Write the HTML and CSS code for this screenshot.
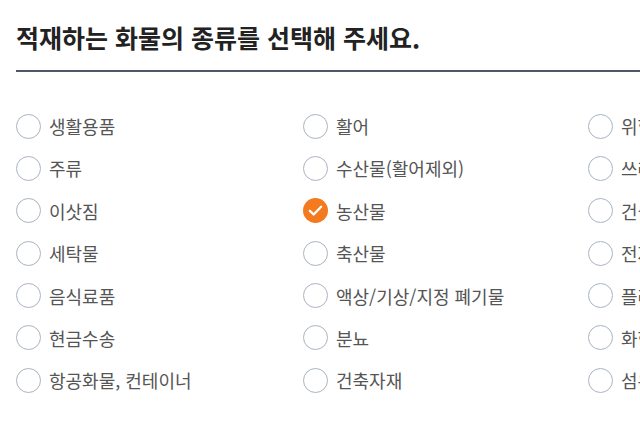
FILE: index.html
```html
<!DOCTYPE html>
<html lang="ko">
<head>
<meta charset="utf-8">
<link rel="stylesheet" href="styles.css">
</head>
<body>
<div class="page">
  <h1 class="title">적재하는 화물의 종류를 선택해 주세요.</h1>
  <div class="options">
    <label class="opt"><span class="radio"></span><span class="label">생활용품</span></label>
    <label class="opt"><span class="radio"></span><span class="label">활어</span></label>
    <label class="opt"><span class="radio"></span><span class="label">위험물</span></label>

    <label class="opt"><span class="radio"></span><span class="label">주류</span></label>
    <label class="opt"><span class="radio"></span><span class="label">수산물(활어제외)</span></label>
    <label class="opt"><span class="radio"></span><span class="label">쓰레기</span></label>

    <label class="opt"><span class="radio"></span><span class="label">이삿짐</span></label>
    <label class="opt"><span class="radio checked"><svg viewBox="0 0 24 24" width="25" height="25"><circle cx="12" cy="12" r="12" fill="#f47a1f"/><path d="M6.6 12.3l3.6 3.5 7.2-7.4" fill="none" stroke="#fff" stroke-width="2.2" stroke-linecap="round" stroke-linejoin="round"/></svg></span><span class="label">농산물</span></label>
    <label class="opt"><span class="radio"></span><span class="label">건설폐기물</span></label>

    <label class="opt"><span class="radio"></span><span class="label">세탁물</span></label>
    <label class="opt"><span class="radio"></span><span class="label">축산물</span></label>
    <label class="opt"><span class="radio"></span><span class="label">전자제품</span></label>

    <label class="opt"><span class="radio"></span><span class="label">음식료품</span></label>
    <label class="opt"><span class="radio"></span><span class="label">액상/기상/지정 폐기물</span></label>
    <label class="opt"><span class="radio"></span><span class="label">플라스틱</span></label>

    <label class="opt"><span class="radio"></span><span class="label">현금수송</span></label>
    <label class="opt"><span class="radio"></span><span class="label">분뇨</span></label>
    <label class="opt"><span class="radio"></span><span class="label">화학제품</span></label>

    <label class="opt"><span class="radio"></span><span class="label">항공화물, 컨테이너</span></label>
    <label class="opt"><span class="radio"></span><span class="label">건축자재</span></label>
    <label class="opt"><span class="radio"></span><span class="label">섬유제품</span></label>
  </div>
</div>
</body>
</html>
```

FILE: styles.css
```css
html, body {
  margin: 0;
  padding: 0;
  overflow: hidden;
  background: #ffffff;
}
body {
  font-family: "Noto Sans CJK KR", "Noto Sans", sans-serif;
}
.page {
  width: 900px;
  padding: 20px 0 0 16px;
}
.title {
  margin: 0;
  font-size: 25px;
  line-height: 34px;
  font-weight: 700;
  color: #222222;
  letter-spacing: 0;
  padding-bottom: 16px;
  border-bottom: 2px solid #50566a;
}
.options {
  display: grid;
  grid-template-columns: 287px 285px 287px;
  row-gap: 16.4px;
  padding-top: 41px;
}
.opt {
  display: flex;
  align-items: center;
  gap: 8px;
  height: 26px;
}
.radio {
  width: 25px;
  height: 25px;
  box-sizing: border-box;
  border: 1.5px solid #aab4c1;
  border-radius: 50%;
  flex: none;
}
.radio.checked {
  border: none;
}
.radio svg {
  display: block;
}
.label {
  font-size: 18px;
  color: #555555;
  letter-spacing: 0;
  white-space: nowrap;
}
```
